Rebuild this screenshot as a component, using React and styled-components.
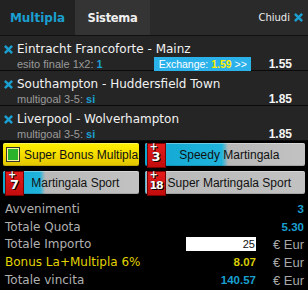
import styled, { createGlobalStyle } from 'styled-components'

const GlobalStyle = createGlobalStyle`
  html, body { margin: 0; padding: 0; background: #000; }
  body { font-family: "DejaVu Sans", sans-serif; }
`

const Slip = styled.div`
  width: 308px;
  height: 290px;
  background: #000;
  overflow: hidden;
`

const Header = styled.div`
  display: flex;
  align-items: stretch;
  height: 35px;
  background: #2a2a2a;
  border-bottom: 1px solid #111;
`

const Tab = styled.div`
  width: 75px;
  display: flex;
  align-items: center;
  justify-content: center;
  font-weight: bold;
  font-size: ${p => (p.$active ? '12px' : '11.5px')};
  letter-spacing: ${p => (p.$active ? '0' : '-0.3px')};
  color: ${p => (p.$active ? '#1a9fd0' : '#f0f0f0')};
  background: ${p => (p.$active ? '#222' : '#343434')};
`

const Close = styled.div`
  margin-left: auto;
  display: flex;
  align-items: center;
  gap: 4px;
  padding-right: 5px;
  font-size: 10px;
  color: #eee;
`

const Event = styled.div`
  display: flex;
  height: 35px;
  background: #252525;
  border-bottom: 1px solid #0b0b0b;
  padding: 5px 16px 0 4px;
  box-sizing: border-box;
`

const Remove = styled.div`
  width: 13px;
  height: 16px;
  display: flex;
  align-items: center;
  flex-shrink: 0;
`

const Body = styled.div`
  flex: 1;
  min-width: 0;
`

const Title = styled.div`
  height: 16px;
  line-height: 16px;
  font-size: 12px;
  color: #f2f2f2;
  white-space: nowrap;
`

const SubLine = styled.div`
  display: flex;
  align-items: center;
  height: 14px;
`

const Market = styled.span`
  font-family: "Liberation Sans", sans-serif;
  font-size: 11px;
  color: #9a9a9a;
  & > b { color: #1a9fd0; }
`

const Exchange = styled.span`
  margin-left: auto;
  width: 92px;
  height: 14px;
  line-height: 14px;
  padding-left: 5px;
  background: #2cb2ea;
  font-family: "Liberation Sans", sans-serif;
  font-size: 10.5px;
  color: #fff;
  & > b { color: #ffee00; }
`

const Odds = styled.span`
  margin-left: ${p => (p.$after ? '18px' : 'auto')};
  font-family: "Liberation Sans", sans-serif;
  font-weight: bold;
  font-size: 12px;
  color: #f4f4f4;
`

const Buttons = styled.div`
  display: grid;
  grid-template-columns: 1fr 1fr;
  column-gap: 6px;
  row-gap: 5px;
  padding: 2px 3px 0;
`

const Option = styled.div`
  position: relative;
  display: flex;
  align-items: center;
  height: 23px;
  border-radius: 2px;
  font-family: "Liberation Sans", sans-serif;
  font-size: 12px;
  color: #111;
  white-space: nowrap;
  background: ${p =>
    p.$yellow
      ? 'linear-gradient(#fff200, #f2d800 60%, #e0c400)'
      : `linear-gradient(90deg, #0fa6d2 0, #20b4dc ${p.$fill - 3}%, #b8b8b8 ${p.$fill + 1}%, #c2c2c2 100%)`};
  box-shadow: inset 0 1px 0 rgba(255,255,255,0.35), inset 0 -1px 0 rgba(0,0,0,0.15);
`

const OptionLabel = styled.span`
  flex: 1;
  text-align: center;
  padding: 0 14px 0 2px;
`

const Check = styled.span`
  width: 12px;
  height: 13px;
  margin: 0 4px 0 3px;
  border: 1px solid #333;
  outline: 1px solid #fff6a0;
  outline-offset: -2px;
  background: #2cb32c;
  box-sizing: content-box;
`

const Badge = styled.span`
  position: relative;
  width: 19px;
  height: 25px;
  margin: 0 0 0 2px;
  align-self: flex-start;
  background: linear-gradient(#e51b1b, #c20c0c);
  border: 1px solid #7a0000;
  box-sizing: border-box;
  color: #fff;
  font-family: "DejaVu Sans", sans-serif;
  font-weight: bold;
  text-shadow: 0 0 1px #000, 1px 1px 0 #000;
  display: flex;
  align-items: flex-end;
  justify-content: center;
  padding-bottom: 3px;
  font-size: ${p => (p.$small ? '11px' : '13px')};
  letter-spacing: ${p => (p.$small ? '-1px' : '0')};
  &:before {
    content: '+';
    position: absolute;
    left: 2px;
    top: -3px;
    font-size: 10px;
  }
`

const Summary = styled.div`
  padding: 6px 4px 0 5px;
`

const Line = styled.div`
  display: flex;
  align-items: center;
  height: 17.8px;
`

const Label = styled.span`
  flex: 1;
  font-size: 12px;
  color: ${p => (p.$bonus ? '#e2d200' : '#b0b0b0')};
`

const Value = styled.span`
  font-family: "Liberation Sans", sans-serif;
  font-weight: bold;
  font-size: 11.5px;
  color: ${p => (p.$bonus ? '#d8cc00' : '#1a9fd0')};
`

const Amount = styled.input`
  width: 70px;
  height: 14px;
  padding: 0 1px 0 0;
  border: none;
  outline: none;
  text-align: right;
  font-family: "Liberation Sans", sans-serif;
  font-size: 11px;
  color: #111;
  background: #fff;
  box-sizing: border-box;
`

const Currency = styled.span`
  width: 48px;
  text-align: right;
  font-family: "Liberation Sans", sans-serif;
  font-size: 13px;
  color: #a8a8a8;
`

const XIcon = ({ size = 9 }) => (
  <svg width={size} height={size} viewBox="0 0 10 10">
    <path d="M1 1 L9 9 M9 1 L1 9" stroke="#1a9fd0" strokeWidth="2.8" />
  </svg>
)

const events = [
  { title: 'Eintracht Francoforte - Mainz', market: 'esito finale 1x2:', pick: '1', odds: '1.55', exchange: '1.59' },
  { title: 'Southampton - Huddersfield Town', market: 'multigoal 3-5:', pick: 'si', odds: '1.85' },
  { title: 'Liverpool - Wolverhampton', market: 'multigoal 3-5:', pick: 'si', odds: '1.85' },
]

export default function App() {
  return (
    <Slip>
      <GlobalStyle />
      <Header>
        <Tab $active>Multipla</Tab>
        <Tab>Sistema</Tab>
        <Close>Chiudi <XIcon /></Close>
      </Header>
      {events.map(ev => (
        <Event key={ev.title}>
          <Remove><XIcon /></Remove>
          <Body>
            <Title>{ev.title}</Title>
            <SubLine>
              <Market>{ev.market} <b>{ev.pick}</b></Market>
              {ev.exchange && (
                <Exchange>Exchange: <b>{ev.exchange}</b> &gt;&gt;</Exchange>
              )}
              <Odds $after={!!ev.exchange}>{ev.odds}</Odds>
            </SubLine>
          </Body>
        </Event>
      ))}
      <Buttons>
        <Option $yellow>
          <Check />
          <span>Super Bonus Multipla</span>
        </Option>
        <Option $fill={51}>
          <Badge>3</Badge>
          <OptionLabel>Speedy Martingala</OptionLabel>
        </Option>
        <Option $fill={30}>
          <Badge>7</Badge>
          <OptionLabel>Martingala Sport</OptionLabel>
        </Option>
        <Option $fill={0}>
          <Badge $small>18</Badge>
          <OptionLabel>Super Martingala Sport</OptionLabel>
        </Option>
      </Buttons>
      <Summary>
        <Line><Label>Avvenimenti</Label><Value>3</Value></Line>
        <Line><Label>Totale Quota</Label><Value>5.30</Value></Line>
        <Line><Label>Totale Importo</Label><Amount defaultValue="25" /><Currency>€ Eur</Currency></Line>
        <Line><Label $bonus>Bonus La+Multipla 6%</Label><Value $bonus>8.07</Value><Currency>€ Eur</Currency></Line>
        <Line><Label>Totale vincita</Label><Value>140.57</Value><Currency>€ Eur</Currency></Line>
      </Summary>
    </Slip>
  )
}
